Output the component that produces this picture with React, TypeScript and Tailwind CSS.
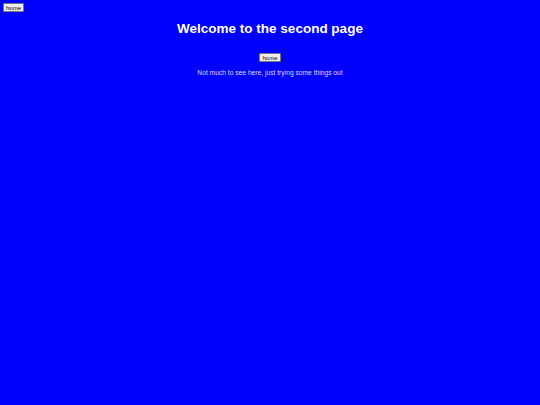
export default function App() {
  return (
    <div className="min-h-screen bg-[#0000ff] text-white font-['Liberation_Sans',Arial,sans-serif]">
      <div className="pt-[3px] pl-[3px]">
        <button className="block h-[9px] px-[2px] bg-[#efefef] border border-[#767676] text-black text-[6px] leading-none rounded-[1px]">
          home
        </button>
      </div>
      <div className="flex flex-col items-center">
        <h1 className="mt-[9px] text-[13.5px] font-bold leading-[16px] text-white">Welcome to the second page</h1>
        <button className="mt-[16px] h-[9px] px-[2px] bg-[#efefef] border border-[#767676] text-black text-[6px] leading-none rounded-[1px]">
          home
        </button>
        <p className="mt-[6px] text-[6.7px] leading-[9px] text-[#dcdcff]">Not much to see here, just trying some things out</p>
      </div>
    </div>
  );
}
